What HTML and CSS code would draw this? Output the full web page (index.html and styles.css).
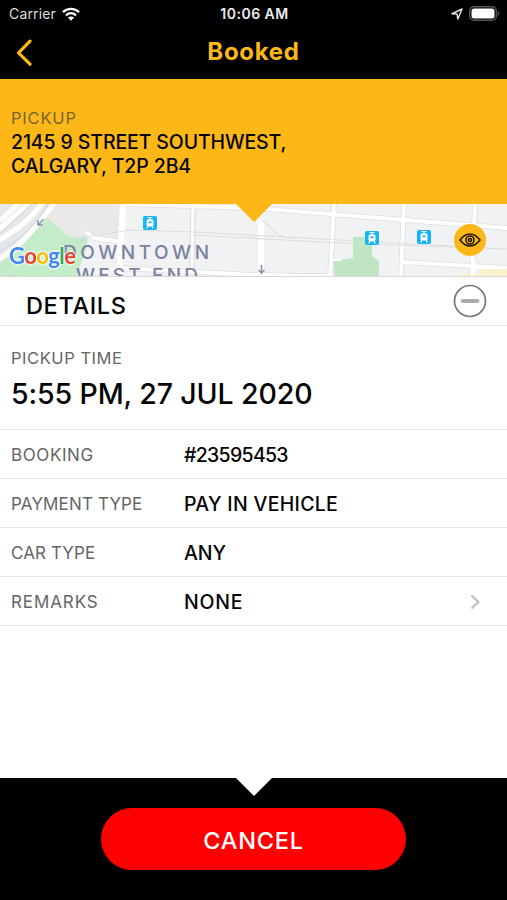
FILE: index.html
```html
<!DOCTYPE html>
<html lang="en">
<head>
<meta charset="utf-8">
<meta name="viewport" content="width=device-width, initial-scale=1">
<title>Booked</title>
<link rel="stylesheet" href="styles.css">
</head>
<body>
<div class="screen">
  <header class="top">
    <div class="status">
      <div class="carrier"><span>Carrier</span>
        <svg width="18" height="14" viewBox="0 0 18 14" fill="none" stroke="#fff" stroke-width="2.4"><path d="M1 5.2C5.5.8 12.500.8 17 5.200"/><path d="M4 8.300c2.900-2.700 7.100-2.700 10 0"/><path d="M9 13.700 5.900 10.600c1.800-1.600 4.400-1.600 6.200 0z" fill="#fff" stroke="none"/></svg>
      </div>
      <span class="clock">10:06 AM</span>
      <div class="indicators">
        <svg width="12" height="12" viewBox="0 0 12 12" fill="none" stroke="#ddd" stroke-width="1.500" stroke-linejoin="round"><path d="M1 5.800 11 1 6.800 11 6 6z"/></svg>
        <svg width="31" height="15" viewBox="0 0 31 15"><rect x=".7" y=".7" width="26.600" height="13.600" rx="4.200" fill="none" stroke="#555" stroke-width="1.400"/><rect x="2.500" y="2.500" width="23" height="10" rx="2.500" fill="#fff"/><path d="M28.700 5c2 .8 2 4.200 0 5z" fill="#555"/></svg>
      </div>
    </div>
    <div class="nav">
      <svg class="back" width="17" height="27" viewBox="0 0 17 27" fill="none" stroke="#fdb817" stroke-width="3.200" stroke-linecap="round" stroke-linejoin="round"><path d="M15 2.200 3.500 13.800l11.500 11.400"/></svg>
      <h1>Booked</h1>
    </div>
  </header>
  <section class="pickup">
    <p class="label pickup-label">PICKUP</p>
    <p class="address">2145 9 STREET SOUTHWEST,<br>CALGARY, T2P 2B4</p>
  </section>
  <section class="map">
    <svg class="map-art" width="507" height="73" viewBox="0 0 507 73">
      <defs>
        <g id="tram"><rect width="14" height="14" rx="2" fill="#14b4f5"/><path d="M4.500 1.500h5M7 1.500v2" stroke="#fff" stroke-width="1.200"/><rect x="3.500" y="3.200" width="7" height="7.300" rx="1.800" fill="#fff"/><path d="M5.500 5.500h3v1.800h-3z" fill="#14b4f5"/><path d="m5 10-1.300 2.500M9 10l1.300 2.500" stroke="#fff" stroke-width="1.200"/></g>
      </defs>
      <rect width="507" height="73" fill="#f0f2f3"/>
      <path d="M48 0h72v36L88 33 66 32 46 15z" fill="#ebe9e7"/>
      <path d="M47 14 68 32l20 2-2 12-10 27H0V53L18 41z" fill="#c3ecc8"/>
      <path d="M0 0h56L15 49 0 59z" fill="#e5e8ea"/>
      <path d="M-4 28 30-2M-4 38C18 26 33 13 43-2M-3 56C20 44 37 22 55-2M0 17 20-2" fill="none" stroke="#fff" stroke-width="5"/>
      <path d="M-3 33 34-2M0 47C20 36 39 18 49-1M48 73C59 56 69 47 88 31M0 65q13 8 19 8" fill="none" stroke="#cbd3d2"/>
      <path d="M86 28 94 34 122 38M193 0l-1 64M125 0l128 4 254 20M119 64l135 7 115 2M334 0l-4 73M404 0l-3 73M475 0l-3 73M401 58l106 6" fill="none" stroke="#dcdee2" stroke-width="5.500"/>
      <g fill="none" stroke="#fff" stroke-width="4"><path d="M86 28 94 34 122 38M125 0l128 4 254 20M119 64l135 7 115 2M334 0l-4 73M404 0l-3 73M475 0l-3 73M401 58l106 6"/><path d="M123 0l-4 73M261 14v59" stroke-width="6"/><path d="M193 0l-1 64" stroke-width="3"/></g>
      <path d="M66 36 130 26 193 28 340 36 507 45M193 31 340 39 507 45M262 16l15 14 11 4" fill="none" stroke="#dddfe1" stroke-width="1.200"/>
      <path d="M353 33h19v19l7 5v16h-45V57l19-3z" fill="#bfe5c4"/>
      <path d="M333 56h8" stroke="#fff" stroke-width="2"/>
      <path d="M482 65h25v8h-49v-3h24z" fill="#fdf1cc"/><path d="M474 57l-1 16" stroke="#fff" stroke-width="4"/>
      <path d="m44 15-6 6m0-5v5h5M261.500 61v8m-3-3 3 3 3-3" fill="none" stroke="#8d92aa" stroke-width="1.600"/>
      <g class="district"><text x="63" y="55" textLength="146">DOWNTOWN</text><text x="76" y="78" textLength="122">WEST END</text></g>
      <use href="#tram" x="143" y="12"/><use href="#tram" x="365" y="27"/><use href="#tram" x="417" y="26"/>
      <text class="google" x="9" y="59.500"><tspan fill="#4285f4">G</tspan><tspan fill="#ea4335">o</tspan><tspan fill="#fbbc05">o</tspan><tspan fill="#4285f4">g</tspan><tspan fill="#34a853">l</tspan><tspan fill="#ea4335">e</tspan></text>
      <path d="M0 72.500h507" stroke="#d8d8d8"/>
    </svg>
    <button class="eye" aria-label="View map"><svg width="22" height="14" viewBox="0 0 22 14" fill="none" stroke="#211a07" stroke-width="1.600"><path d="M1 7C5 1.800 8 1 11 1s6 .8 10 6c-4 5.200-7 6-10 6S5 12.200 1 7z"/><circle cx="11" cy="7" r="4"/><circle cx="11" cy="7" r="1.500"/></svg></button>
  </section>
  <section class="details-head">
    <h2>DETAILS</h2>
    <svg width="34" height="34" viewBox="0 0 34 34"><circle cx="17" cy="17" r="15.500" fill="none" stroke="#777" stroke-width="1.700"/><path d="M9.800 17h14.600" stroke="#aaa" stroke-width="4.200" stroke-linecap="round"/></svg>
  </section>
  <section class="time">
    <p class="label time-label">PICKUP TIME</p>
    <p class="when">5:55 PM, 27 JUL 2020</p>
  </section>
  <dl class="rows">
    <div class="row"><dt class="k-booking">BOOKING</dt><dd class="v-booking">#23595453</dd></div>
    <div class="row"><dt class="k-payment">PAYMENT TYPE</dt><dd class="v-payment">PAY IN VEHICLE</dd></div>
    <div class="row"><dt class="k-car">CAR TYPE</dt><dd class="v-car">ANY</dd></div>
    <div class="row"><dt class="k-remarks">REMARKS</dt><dd class="v-remarks">NONE</dd>
      <svg class="chevron" width="11" height="16" viewBox="0 0 11 16" fill="none" stroke="#bbb" stroke-width="2"><path d="m1.500 1.500 7 6.500-7 6.500"/></svg></div>
  </dl>
  <footer class="bottom"><button class="cancel">CANCEL</button></footer>
</div>
</body>
</html>
```
FILE: styles.css
```css
* { box-sizing: border-box; }
body, h1, h2, p, dl, dd { margin: 0; }
body { background: #fff; color: #050505; font-family: Inter, "Liberation Sans", sans-serif; }
button { border: 0; padding: 0; font: inherit; }
svg { display: block; flex: none; }
.screen { width: 507px; height: 900px; display: flex; flex-direction: column; overflow: hidden; }
.top { height: 79px; background: #000; flex: none; }
.status { height: 27px; display: grid; grid-template-columns: 1fr auto 1fr; align-items: center; padding: 0 7px 0 9px; color: #fff; font-size: 14px; }
.carrier, .indicators { display: flex; align-items: center; gap: 6px; }
.carrier { color: #ddd; letter-spacing: .15px; }
.indicators { justify-content: flex-end; }
.clock { font-weight: 600; letter-spacing: .5px; color: #eee; }
.nav { height: 52px; display: grid; grid-template-columns: 1fr auto 1fr; align-items: center; padding: 0 15px; }
.nav h1 { color: #fdb817; font-size: 24px; line-height: 48px; font-weight: 700; padding-bottom: 2px; letter-spacing: .7px; }
.back { margin-top: -2px; }
.pickup { height: 125px; flex: none; background: #fdb817; padding: 29px 11px 0; }
.label { font-size: 16.5px; line-height: 20px; color: #666; }
.pickup-label { color: #796333; letter-spacing: .8px; }
.time-label { letter-spacing: .55px; }
.address { margin-top: 3px; font-size: 19.500px; line-height: 23.500px; font-weight: 500; letter-spacing: -.12px; }
.map { position: relative; height: 73px; flex: none; overflow: hidden; }
.map::before { content: ""; position: absolute; z-index: 1; top: 0; left: 236px; border: solid transparent; border-width: 18px 18px 0; border-top-color: #fdb817; }
.district { fill: #7b819f; font-size: 19px; font-weight: 500; }
.google { font-family: Lato, sans-serif; font-size: 22px; font-weight: 700; letter-spacing: -.6px; filter: drop-shadow(0 0 1px #fff) drop-shadow(0 0 1px #fff); }
.eye { position: absolute; left: 454px; top: 20px; width: 32px; height: 32px; border-radius: 50%; background: #fdb817; display: grid; place-items: center; }
.details-head { height: 49px; flex: none; display: flex; align-items: center; justify-content: space-between; padding: 0 20px 0 26px; border-bottom: 1px solid #e6e6e6; }
.details-head h2 { font-size: 23.500px; font-weight: 500; line-height: 32px; padding-top: 9px; letter-spacing: .65px; }
.time { height: 104px; flex: none; padding: 22px 11px 0; border-bottom: 1px solid #e6e6e6; }
.when { margin-top: 8px; font-size: 28.500px; font-weight: 500; line-height: 36px; letter-spacing: -.12px; }
.row { height: 49px; display: grid; grid-template-columns: 173px 1fr auto; align-items: center; padding: 1px 26px 0 11px; border-bottom: 1px solid #e6e6e6; }
.row dt { font-size: 17px; color: #666; }
.row dd { font-size: 19.500px; font-weight: 500; }
.k-booking { letter-spacing: .6px; }
.k-payment { letter-spacing: .15px; }
.k-car { letter-spacing: .1px; }
.k-remarks { letter-spacing: .9px; }
.v-booking { letter-spacing: -.7px; }
.v-payment { letter-spacing: .3px; }
.v-remarks { letter-spacing: .8px; }
.bottom { position: relative; margin-top: auto; height: 122px; flex: none; background: #000; padding-top: 30px; }
.bottom::before { content: ""; position: absolute; top: 0; left: 236px; border: solid transparent; border-width: 18px 18px 0; border-top-color: #fff; }
.cancel { display: block; width: 305px; height: 62px; margin: 0 auto; padding-top: 2px; border-radius: 31px; background: #f00; color: #fff; font-size: 23.500px; font-weight: 500; letter-spacing: .8px; }
```
